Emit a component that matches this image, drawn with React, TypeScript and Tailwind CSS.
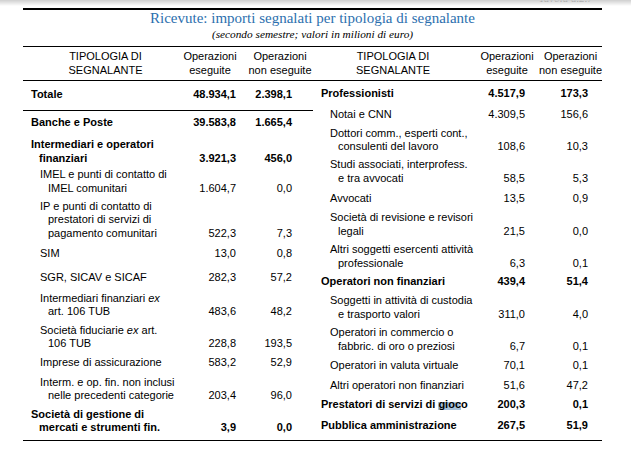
import * as React from "react";

type Row = {
  lines: React.ReactNode[];
  a: string;
  b: string;
  bold?: boolean;
  sub?: boolean;
  pt: string;
};

const leftRows: Row[] = [
  { lines: ["Banche e Poste"], a: "39.583,8", b: "1.665,4", bold: true, pt: "pt-[5px]" },
  { lines: ["Intermediari e operatori", "finanziari"], a: "3.921,3", b: "456,0", bold: true, pt: "pt-[9px]" },
  { lines: ["IMEL e punti di contatto di", "IMEL comunitari"], a: "1.604,7", b: "0,0", sub: true, pt: "pt-[3px]" },
  {
    lines: ["IP e punti di contatto di", "prestatori di servizi di", "pagamento comunitari"],
    a: "522,3",
    b: "7,3",
    sub: true,
    pt: "pt-[4.5px]",
  },
  { lines: ["SIM"], a: "13,0", b: "0,8", sub: true, pt: "pt-[6.5px]" },
  { lines: ["SGR, SICAV e SICAF"], a: "282,3", b: "57,2", sub: true, pt: "pt-[10.5px]" },
  {
    lines: [
      <>
        Intermediari finanziari <i>ex</i>
      </>,
      "art. 106 TUB",
    ],
    a: "483,6",
    b: "48,2",
    sub: true,
    pt: "pt-[7.5px]",
  },
  {
    lines: [
      <>
        Società fiduciarie <i>ex</i> art.
      </>,
      "106 TUB",
    ],
    a: "228,8",
    b: "193,5",
    sub: true,
    pt: "pt-[5px]",
  },
  { lines: ["Imprese di assicurazione"], a: "583,2", b: "52,9", sub: true, pt: "pt-[5px]" },
  {
    lines: ["Interm. e op. fin. non inclusi", "nelle precedenti categorie"],
    a: "203,4",
    b: "96,0",
    sub: true,
    pt: "pt-[6.5px]",
  },
  { lines: ["Società di gestione di", "mercati e strumenti fin."], a: "3,9", b: "0,0", bold: true, pt: "pt-[5px]" },
];

const rightRows: Row[] = [
  { lines: ["Professionisti"], a: "4.517,9", b: "173,3", bold: true, pt: "pt-[6px]" },
  { lines: ["Notai e CNN"], a: "4.309,5", b: "156,6", sub: true, pt: "pt-[7px]" },
  { lines: ["Dottori comm., esperti cont.,", "consulenti del lavoro"], a: "108,6", b: "10,3", sub: true, pt: "pt-[5.5px]" },
  { lines: ["Studi associati, interprofess.", "e tra avvocati"], a: "58,5", b: "5,3", sub: true, pt: "pt-[4.5px]" },
  { lines: ["Avvocati"], a: "13,5", b: "0,9", sub: true, pt: "pt-[7px]" },
  { lines: ["Società di revisione e revisori", "legali"], a: "21,5", b: "0,0", sub: true, pt: "pt-[5.5px]" },
  {
    lines: ["Altri soggetti esercenti attività", "professionale"],
    a: "6,3",
    b: "0,1",
    sub: true,
    pt: "pt-[5px]",
  },
  { lines: ["Operatori non finanziari"], a: "439,4", b: "51,4", bold: true, pt: "pt-[5px]" },
  {
    lines: ["Soggetti in attività di custodia", "e trasporto valori"],
    a: "311,0",
    b: "4,0",
    sub: true,
    pt: "pt-[5.5px]",
  },
  {
    lines: ["Operatori in commercio o", "fabbric. di oro o preziosi"],
    a: "6,7",
    b: "0,1",
    sub: true,
    pt: "pt-[5px]",
  },
  { lines: ["Operatori in valuta virtuale"], a: "70,1", b: "0,1", sub: true, pt: "pt-[6px]" },
  { lines: ["Altri operatori non finanziari"], a: "51,6", b: "47,2", sub: true, pt: "pt-[6.5px]" },
  {
    lines: [
      <>
        Prestatori di servizi di{" "}
        <span className="bg-[linear-gradient(to_bottom,transparent_30%,#a9c3da_30%)]">gioc</span>o
      </>,
    ],
    a: "200,3",
    b: "0,1",
    bold: true,
    pt: "pt-[5.5px]",
  },
  { lines: ["Pubblica amministrazione"], a: "267,5", b: "51,9", bold: true, pt: "pt-[7.5px]" },
];

function TableRow({ r, side }: { r: Row; side: "l" | "r" }) {
  const cols = side === "l" ? "grid-cols-[149px_56px_56px]" : "grid-cols-[154px_50px_63px]";
  return (
    <div className={`grid ${cols} items-end ${r.pt} ${r.bold ? "font-bold" : ""}`}>
      <div className={r.sub ? "pl-[9px]" : ""}>
        {r.lines.map((l, i) => (
          <div key={i} className={`whitespace-nowrap ${i > 0 ? "pl-[8px]" : ""}`}>
            {l}
          </div>
        ))}
      </div>
      <div className="text-right whitespace-nowrap">{r.a}</div>
      <div className="text-right whitespace-nowrap">{r.b}</div>
    </div>
  );
}

export default function App() {
  return (
    <div className="relative h-[453px] w-[631px] overflow-hidden bg-white text-black">
      {/* cut-off page caption + viewer shadow */}
      <div className="relative flex h-[8px] justify-end overflow-hidden pr-[38px]">
        <div className="-mt-[9px] text-[11px] leading-[14px] text-[#444] italic [font-family:'Liberation_Serif',serif]">
          Tavola a.2.7
        </div>
        <div className="absolute inset-x-0 top-0 h-[6px] bg-gradient-to-b from-[#cfcfcf] to-transparent" />
      </div>

      <div className="ml-[23px] w-[579px] text-[11px] leading-[13.5px] [font-family:'Liberation_Sans',Arial,sans-serif]">
        <div className="border-t-2 border-b border-black pb-[5px] text-center [font-family:'Liberation_Serif',serif]">
          <div className="text-[15px] leading-[16px] text-[#2c6fae]">
            Ricevute: importi segnalati per tipologia di segnalante
          </div>
          <div className="mt-[1px] text-[11.3px] leading-[14px] italic">
            (secondo semestre; valori in milioni di euro)
          </div>
        </div>

        <div className="flex border-b border-black pt-[3px] pb-[3px] text-center">
          <div className="flex w-[290px] pl-[8px]">
            <div className="w-[149px]">
              TIPOLOGIA DI
              <br />
              SEGNALANTE
            </div>
            <div className="w-[60px] whitespace-nowrap">
              Operazioni
              <br />
              eseguite
            </div>
            <div className="ml-[8px] w-[64px] whitespace-nowrap">
              Operazioni
              <br />
              non eseguite
            </div>
          </div>
          <div className="flex w-[289px] pl-[8px]">
            <div className="w-[154px] pr-[10px]">
              TIPOLOGIA DI
              <br />
              SEGNALANTE
            </div>
            <div className="w-[64px] whitespace-nowrap">
              Operazioni
              <br />
              eseguite
            </div>
            <div className="w-[63px] whitespace-nowrap">
              Operazioni
              <br />
              non eseguite
            </div>
          </div>
        </div>

        <div className="flex border-b border-black">
          <div className="w-[290px] pb-[5px]">
            <div className="border-b border-black pr-[21px] pl-[8px]">
              <TableRow
                r={{ lines: ["Totale"], a: "48.934,1", b: "2.398,1", bold: true, pt: "pt-[6.5px]" }}
                side="l"
              />
              <div className="h-[8.5px]" />
            </div>
            <div className="pr-[21px] pl-[8px]">
              {leftRows.map((r, i) => (
                <TableRow key={i} r={r} side="l" />
              ))}
            </div>
          </div>
          <div className="w-[289px] pr-[14px] pb-[6px] pl-[8px]">
            {rightRows.map((r, i) => (
              <TableRow key={i} r={r} side="r" />
            ))}
          </div>
        </div>
      </div>
    </div>
  );
}
